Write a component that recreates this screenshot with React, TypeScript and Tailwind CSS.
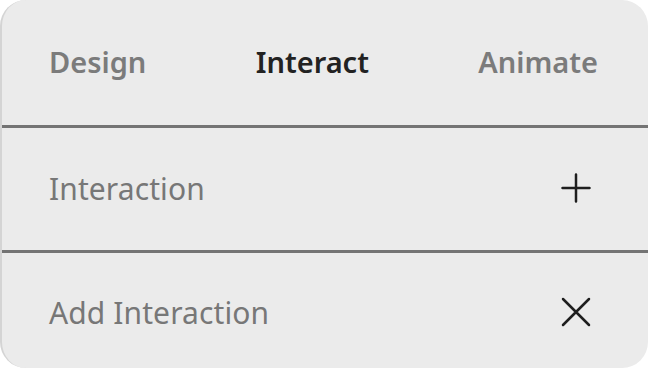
export default function App() {
  const font = { fontFamily: '"Noto Sans", "Open Sans", sans-serif' };
  return (
    <div className="w-[648px] h-[368px] bg-white" style={font}>
      <div className="w-full h-full rounded-[26px] bg-[#ebebeb] border-l-2 border-[#d4d4d4] overflow-hidden flex flex-col">
        <div className="h-[125px] flex items-center justify-between pl-[47px] pr-[50px] text-[29px] font-semibold pb-[2px]">
          <span className="text-[#7b7b7b]">Design</span>
          <span className="text-[#222222]">Interact</span>
          <span className="text-[#7b7b7b]">Animate</span>
        </div>
        <div className="h-[3px] bg-[#747474]" />
        <div className="h-[122px] flex items-center justify-between pl-[47px] pr-[57px] pb-[2px]">
          <span className="text-[30px] text-[#777777] tracking-[0.1px]">Interaction</span>
          <svg width="30" height="30" viewBox="0 0 30 30" fill="none" stroke="#1e1e1e" strokeWidth="2.5" strokeLinecap="round">
            <path d="M15 1.5v27M1.5 15h27" />
          </svg>
        </div>
        <div className="h-[3px] bg-[#747474]" />
        <div className="flex-1 flex items-center justify-between pl-[47px] pr-[57px] pt-[3px]">
          <span className="text-[30px] text-[#777777] tracking-[0.1px]">Add Interaction</span>
          <svg width="30" height="30" viewBox="0 0 30 30" fill="none" stroke="#1e1e1e" strokeWidth="2.5" strokeLinecap="round">
            <path d="M2 2l26 26M28 2L2 28" />
          </svg>
        </div>
      </div>
    </div>
  );
}
